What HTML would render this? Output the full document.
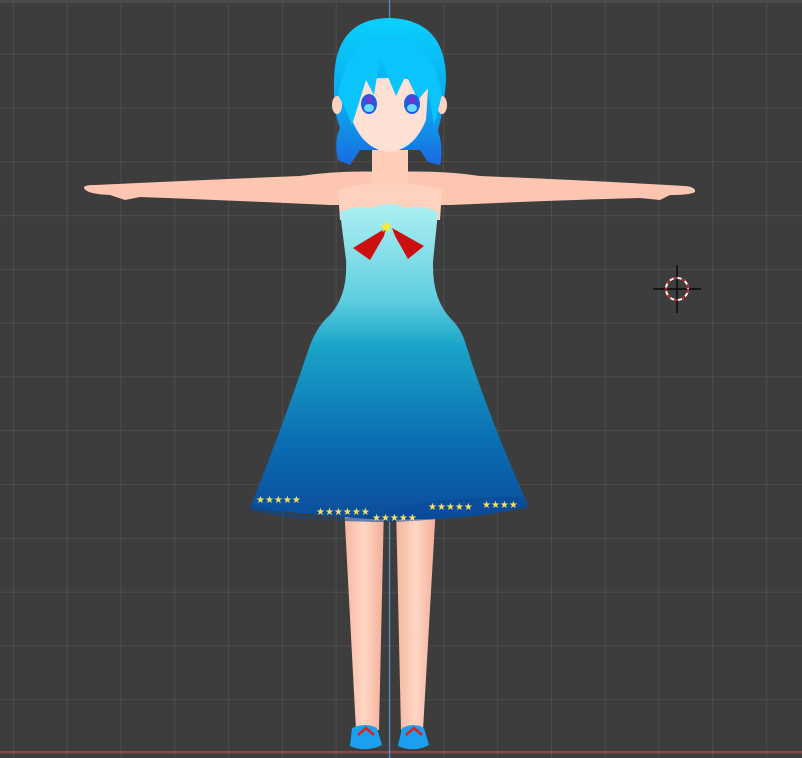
<!DOCTYPE html>
<html><head><meta charset="utf-8"><style>
html,body{margin:0;padding:0;background:#3d3d3d;width:802px;height:758px;overflow:hidden}
svg{display:block}
</style></head><body>
<svg width="802" height="758" viewBox="0 0 802 758" xmlns="http://www.w3.org/2000/svg">
<defs>
<pattern id="g" x="13" y="0" width="53.8" height="53.8" patternUnits="userSpaceOnUse">
<path d="M0 0V53.8M0 0H53.8" stroke="#555" stroke-width="1.3" fill="none"/>
</pattern>
<linearGradient id="dress" x1="0" y1="0" x2="0" y2="1">
<stop offset="0" stop-color="#aef0f2"/>
<stop offset="0.3" stop-color="#5fcfe0"/>
<stop offset="0.45" stop-color="#1aa4c8"/>
<stop offset="0.75" stop-color="#0a6eb3"/>
<stop offset="1" stop-color="#0b4d9a"/>
</linearGradient>
<linearGradient id="hair" x1="0" y1="0" x2="0" y2="1">
<stop offset="0" stop-color="#0ad0ff"/>
<stop offset="0.6" stop-color="#0aa8ee"/>
<stop offset="1" stop-color="#1a6ae0"/>
</linearGradient>
<linearGradient id="leg" x1="0" y1="0" x2="1" y2="0">
<stop offset="0" stop-color="#f4b7a0"/>
<stop offset="0.5" stop-color="#ffd6c4"/>
<stop offset="1" stop-color="#f2ae98"/>
</linearGradient>
</defs>
<rect width="802" height="758" fill="#3d3d3d"/>
<rect x="0" y="0" width="802" height="758" fill="url(#g)"/>
<rect x="0" y="0" width="802" height="3" fill="#4a4a4a"/>
<line x1="0" y1="752" x2="802" y2="752" stroke="#b04a4a" stroke-width="1.5"/>
<line x1="389.5" y1="0" x2="389.5" y2="758" stroke="#5b8fc4" stroke-width="1.2"/>

<!-- legs -->
<path d="M344 505 L384 505 L379 730 L356 730 Z" fill="url(#leg)"/>
<path d="M396 505 L436 505 L423 730 L401 730 Z" fill="url(#leg)"/>
<!-- shoes -->
<path d="M352 728 Q366 722 377 728 L382 745 Q366 753 350 746 Z" fill="#1aa0ee"/>
<path d="M402 728 Q414 722 424 728 L429 745 Q414 753 398 746 Z" fill="#1aa0ee"/>
<path d="M358 735 L366 728 L374 735" stroke="#d22" stroke-width="2.5" fill="none"/>
<path d="M406 735 L414 728 L422 735" stroke="#d22" stroke-width="2.5" fill="none"/>

<!-- arms & shoulders -->
<path d="M84 188 Q83 185 95 185 Q200 180 300 176 Q340 170 389 172 Q440 170 480 176 Q580 180 685 186 Q696 187 695 192 Q690 195 670 195 L660 200 L640 198 Q560 200 450 205 L330 205 Q220 200 140 197 L125 200 L110 195 Q86 194 84 188 Z" fill="#fcc6b0"/>
<path d="M338 190 Q389 175 442 190 L440 220 L340 220 Z" fill="#ffd2c0"/>
<rect x="372" y="140" width="36" height="45" fill="#ffcdb8"/>

<!-- dress -->
<path d="M340 212 Q355 205 372 208 Q389 200 406 208 Q424 205 438 212 L433 262 Q432 300 452 320 Q462 330 466 345 Q490 420 528 505 Q500 515 450 518 Q390 522 330 516 Q285 512 250 508 Q285 420 310 345 Q318 325 330 315 Q348 295 346 260 Z" fill="url(#dress)"/>
<path d="M252 503 Q330 530 390 510 Q450 495 525 497 L528 508 Q450 520 390 522 Q300 522 250 510 Z" fill="#0a4a98" opacity="0.6"/>
<g fill="#f5e060" font-size="10" font-family="DejaVu Sans, sans-serif">
<text x="256" y="503">★★★★★</text>
<text x="316" y="515">★★★★★★</text>
<text x="372" y="521">★★★★★</text>
<text x="428" y="510">★★★★★</text>
<text x="482" y="508">★★★★</text>
</g>
<!-- bow -->
<path d="M386 228 L353 248 L370 260 L384 236 Z" fill="#cc1010"/>
<path d="M392 228 L424 246 L408 259 L395 236 Z" fill="#cc1010"/>
<text x="379" y="232" font-size="16" fill="#ffee22" font-family="DejaVu Sans, sans-serif">★</text>

<!-- hair back -->
<path d="M334 80 Q335 18 390 18 Q446 20 446 80 Q444 110 438 130 Q444 150 440 165 L428 162 L420 150 L360 150 L350 165 L338 160 Q334 140 340 128 Q333 110 334 80 Z" fill="url(#hair)"/>
<!-- ears -->
<ellipse cx="337" cy="105" rx="5" ry="9" fill="#ffd2c0"/>
<ellipse cx="442" cy="105" rx="5" ry="9" fill="#ffd2c0"/>
<!-- face -->
<path d="M350 90 Q352 78 389 78 Q426 78 428 90 L426 120 Q414 150 389 152 Q364 150 352 120 Z" fill="#ffe0d4"/>
<!-- bangs -->
<path d="M338 95 Q348 38 389 36 Q432 38 442 95 L434 125 L428 88 L418 100 L406 75 L396 96 L380 58 L374 95 L366 80 L352 125 L346 110 Z" fill="#0ac4fb"/>
<!-- eyes -->
<ellipse cx="369" cy="104" rx="8" ry="10" fill="#1a5de0"/>
<ellipse cx="369" cy="100" rx="4" ry="4" fill="#6a3ad0"/>
<ellipse cx="369" cy="108" rx="5" ry="4" fill="#6ad8ff"/>
<ellipse cx="412" cy="104" rx="8" ry="10" fill="#1a5de0"/>
<ellipse cx="412" cy="100" rx="4" ry="4" fill="#6a3ad0"/>
<ellipse cx="412" cy="108" rx="5" ry="4" fill="#6ad8ff"/>

<!-- 3D cursor -->
<g>
<line x1="677" y1="265" x2="677" y2="313" stroke="#000" stroke-width="1.2"/>
<line x1="653" y1="289" x2="701" y2="289" stroke="#000" stroke-width="1.2"/>
<circle cx="677" cy="289" r="11" fill="none" stroke="#fff" stroke-width="2"/>
<circle cx="677" cy="289" r="11" fill="none" stroke="#b02020" stroke-width="2" stroke-dasharray="4 4"/>
</g>
</svg>
</body></html>
